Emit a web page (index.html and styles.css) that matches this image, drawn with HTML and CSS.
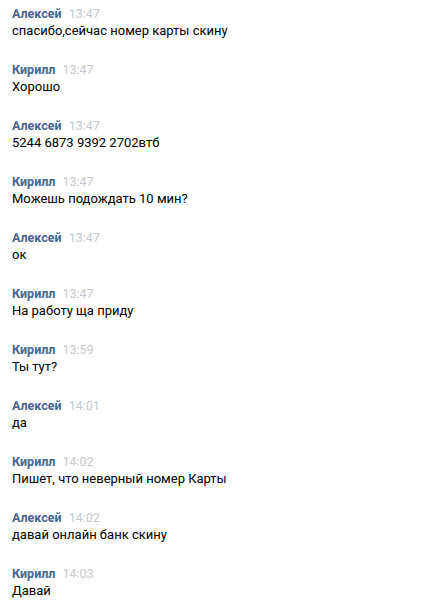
FILE: index.html
```html
<!DOCTYPE html>
<html lang="ru">
<head>
    <meta charset="utf-8">
    <title>Сообщения</title>
    <link rel="stylesheet" href="styles.css">
</head>
<body>
    <div class="chat">
        <div class="msg">
            <div class="head"><span class="name">Алексей</span><span class="time">13:47</span></div>
            <div class="text">спасибо,сейчас номер карты скину</div>
        </div>
        <div class="msg">
            <div class="head"><span class="name">Кирилл</span><span class="time">13:47</span></div>
            <div class="text">Хорошо</div>
        </div>
        <div class="msg">
            <div class="head"><span class="name">Алексей</span><span class="time">13:47</span></div>
            <div class="text">5244 6873 9392 2702втб</div>
        </div>
        <div class="msg">
            <div class="head"><span class="name">Кирилл</span><span class="time">13:47</span></div>
            <div class="text">Можешь подождать 10 мин?</div>
        </div>
        <div class="msg">
            <div class="head"><span class="name">Алексей</span><span class="time">13:47</span></div>
            <div class="text">ок</div>
        </div>
        <div class="msg">
            <div class="head"><span class="name">Кирилл</span><span class="time">13:47</span></div>
            <div class="text">На работу ща приду</div>
        </div>
        <div class="msg">
            <div class="head"><span class="name">Кирилл</span><span class="time">13:59</span></div>
            <div class="text">Ты тут?</div>
        </div>
        <div class="msg">
            <div class="head"><span class="name">Алексей</span><span class="time">14:01</span></div>
            <div class="text">да</div>
        </div>
        <div class="msg">
            <div class="head"><span class="name">Кирилл</span><span class="time">14:02</span></div>
            <div class="text">Пишет, что неверный номер Карты</div>
        </div>
        <div class="msg">
            <div class="head"><span class="name">Алексей</span><span class="time">14:02</span></div>
            <div class="text">давай онлайн банк скину</div>
        </div>
        <div class="msg">
            <div class="head"><span class="name">Кирилл</span><span class="time">14:03</span></div>
            <div class="text">Давай</div>
        </div>
    </div>
</body>
</html>
```

FILE: styles.css
```css
body {
    margin: 0;
    background: #fff;
    font-family: Roboto, "Liberation Sans", sans-serif;
    font-size: 13px;
    color: #000;
}

.chat {
    display: flex;
    flex-direction: column;
    gap: 21px;
    padding: 5px 12px 0;
}

.head {
    display: flex;
    align-items: baseline;
    gap: 7px;
    height: 17px;
    line-height: 18px;
}

.name {
    font-weight: 700;
    color: #45668e;
    font-size: 12.5px;
}

.time {
    color: #c3c9d0;
    font-size: 12.5px;
}

.text {
    line-height: 18px;
}
```
